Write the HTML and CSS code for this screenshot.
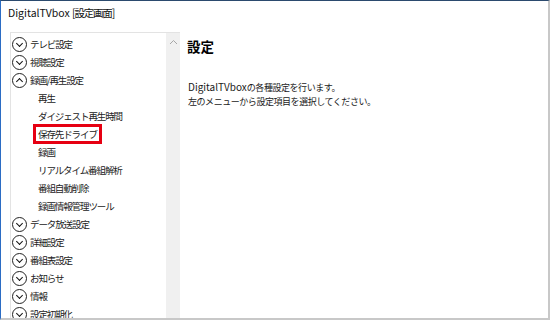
FILE: index.html
```html
<!DOCTYPE html>
<html lang="ja">
<head>
    <meta charset="UTF-8">
    <title>DigitalTVbox [設定画面]</title>
    <link rel="stylesheet" href="styles.css">
</head>
<body>
    <div class="window">
        <!-- Title -->
        <div class="title">DigitalTVbox <span class="ja">[設定画面]</span></div>

        <div class="main">
            <!-- Menu tree -->
            <div class="menu">
                <ul class="tree">
                    <li class="group"><span class="toggle down"></span>テレビ設定</li>
                    <li class="group"><span class="toggle down"></span>視聴設定</li>
                    <li class="group"><span class="toggle up"></span>録画/再生設定</li>
                    <li class="sub">再生</li>
                    <li class="sub">ダイジェスト再生時間</li>
                    <li class="sub"><span class="mark">保存先ドライブ</span></li>
                    <li class="sub">録画</li>
                    <li class="sub">リアルタイム番組解析</li>
                    <li class="sub">番組自動削除</li>
                    <li class="sub">録画情報管理ツール</li>
                    <li class="group"><span class="toggle down"></span>データ放送設定</li>
                    <li class="group"><span class="toggle down"></span>詳細設定</li>
                    <li class="group"><span class="toggle down"></span>番組表設定</li>
                    <li class="group"><span class="toggle down"></span>お知らせ</li>
                    <li class="group"><span class="toggle down"></span>情報</li>
                    <li class="group"><span class="toggle down"></span>設定初期化</li>
                </ul>
                <div class="scrollbar">
                    <svg class="arrow" width="9" height="6" viewBox="0 0 9 6">
                        <path d="M1 5 L4.5 1.5 L8 5" fill="none" stroke="#a6a6a6" stroke-width="1"/>
                    </svg>
                </div>
            </div>

            <!-- Content -->
            <div class="content">
                <h1>設定</h1>
                <p>DigitalTVbox<span class="ja">の各種設定を行います。</span><br><span class="ja">左のメニューから設定項目を選択してください。</span></p>
            </div>
        </div>
    </div>
</body>
</html>
```

FILE: styles.css
```css
/* Reset and basic styles */
* {
    margin: 0;
    padding: 0;
    box-sizing: border-box;
}

body, html {
    width: 100%;
    height: 100%;
    overflow: hidden;
    background-color: #fff;
    font-family: "Noto Sans CJK JP", "Noto Sans", sans-serif;
    color: #000;
}

/* Window frame */
.window {
    width: 550px;
    height: 320px;
    display: flex;
    flex-direction: column;
    border-top: 1px solid #2b4a6e;
    border-left: 1px solid #2b6cc4;
    border-right: 2px solid #c8c8c8;
    border-bottom: 2px solid #c8c8c8;
}

.title {
    height: 31px;
    padding: 4px 0 0 7px;
    font-size: 10.5px;
    line-height: 16px;
    color: #111;
}

.title .ja {
    letter-spacing: -1.2px;
}

.main {
    flex: 1;
    display: flex;
    min-height: 0;
}

/* Menu tree */
.menu {
    width: 170px;
    margin-left: 9px;
    display: flex;
    border-top: 1px solid #e3e3e3;
    border-left: 1px solid #e3e3e3;
    overflow: hidden;
}

.tree {
    flex: 1;
    list-style: none;
    padding-top: 2px;
}

.tree li {
    height: 18px;
    display: flex;
    align-items: center;
    font-size: 9.5px;
    letter-spacing: -1.1px;
    color: #222;
    white-space: nowrap;
}

.tree .group {
    padding-left: 1px;
}

.tree .sub {
    padding-left: 27px;
}

.toggle {
    width: 15px;
    height: 15px;
    border: 1.4px solid #222;
    border-radius: 50%;
    margin-right: 3px;
    position: relative;
    flex: none;
}

.toggle::after {
    content: '';
    position: absolute;
    left: 4px;
    width: 4px;
    height: 4px;
    border-right: 1.6px solid #111;
    border-bottom: 1.6px solid #111;
}

.toggle.down::after {
    top: 3px;
    transform: rotate(45deg);
}

.toggle.up::after {
    top: 5px;
    transform: rotate(-135deg);
}

/* Red highlight frame */
.mark {
    display: inline-block;
    line-height: 14px;
    padding: 0 2px 0 2px;
    margin-left: -5px;
    border: 3px solid #e60012;
}

.scrollbar {
    width: 14px;
    background-color: #f0f0f0;
    display: flex;
    justify-content: center;
    padding-top: 6px;
}

.arrow {
    display: block;
}

/* Content area */
.content {
    flex: 1;
    padding: 3px 0 0 8px;
}

.content h1 {
    font-size: 13.5px;
    font-weight: bold;
    line-height: 22px;
    margin: 0 0 23px -1px;
}

.content p {
    font-size: 10px;
    line-height: 13px;
    color: #1a1a1a;
}

.content .ja {
    font-size: 9px;
    line-height: 12px;
    letter-spacing: -0.45px;
}
```
